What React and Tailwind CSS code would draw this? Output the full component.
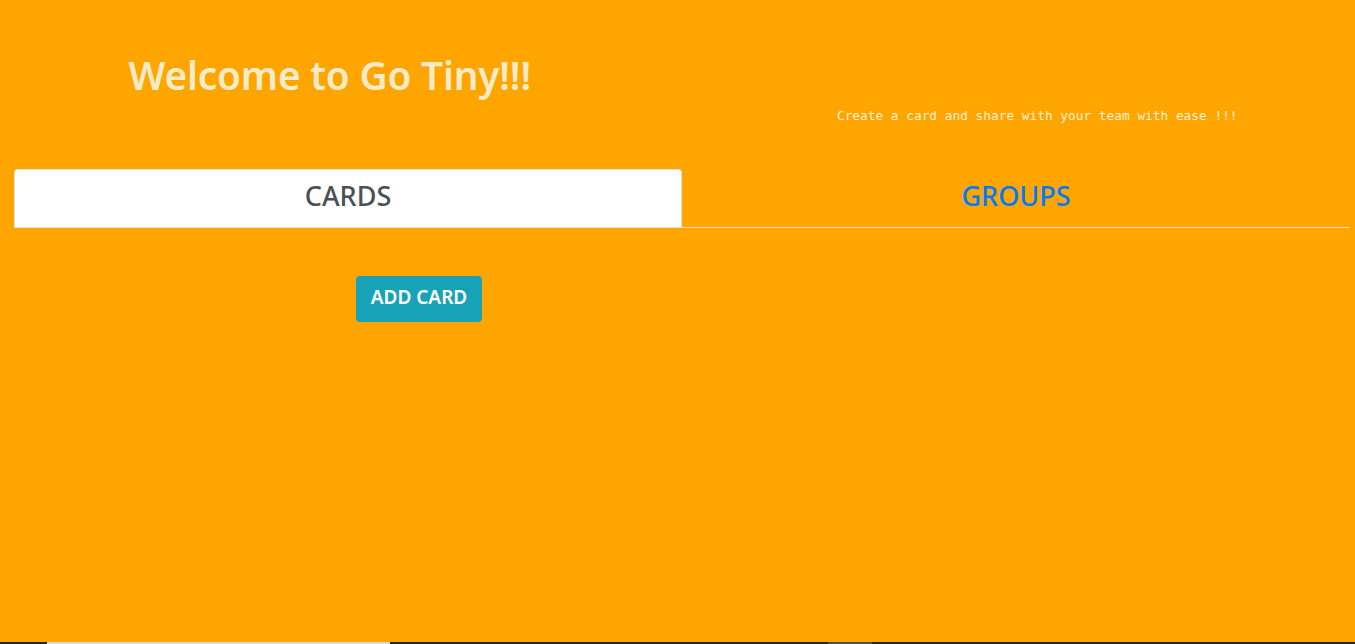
import React, { useState } from 'react';

export default function App() {
  const [tab, setTab] = useState('cards');

  return (
    <div className="min-h-[644px] bg-[#ffa500] flex flex-col" style={{ fontFamily: '"Noto Sans", "Open Sans", sans-serif' }}>
      <div className="flex-1">
        {/* header */}
        <div className="grid grid-cols-2 pt-[50px]">
          <div className="flex justify-center pr-[18px]">
            <h1 className="text-[38.8px] font-semibold text-[#f5ebc6] leading-[50px] tracking-[-0.2px]">Welcome to Go Tiny!!!</h1>
          </div>
          <div className="flex justify-center pt-[58px] pl-[42px]">
            <p className="text-[12.8px] text-[#fdf0d2] leading-[16px]" style={{ fontFamily: '"DejaVu Sans Mono", "Liberation Mono", monospace' }}>
              Create a card and share with your team with ease !!!
            </p>
          </div>
        </div>

        {/* tabs */}
        <div className="mx-[14px] mt-[45px] mr-[5px] flex border-b border-[#f1e2c4]">
          <button
            onClick={() => setTab('cards')}
            className={`w-[668px] h-[58px] rounded-t-[4px] border border-b-0 text-[27px] font-medium pb-[4px] ${tab === 'cards' ? 'bg-white border-[#dee2e6] text-[#495057]' : 'border-transparent text-[#007bff]'}`}
          >
            CARDS
          </button>
          <button
            onClick={() => setTab('groups')}
            className={`flex-1 h-[58px] rounded-t-[4px] border border-b-0 text-[27px] font-medium pb-[4px] ${tab === 'groups' ? 'bg-white border-[#dee2e6] text-[#495057]' : 'border-transparent text-[#007bff]'}`}
          >
            GROUPS
          </button>
        </div>

        {/* content */}
        <div className="pt-[48px] pl-[356px]">
          <button className="h-[46px] w-[126px] rounded-[4px] bg-[#17a2b8] text-white text-[19px] font-semibold pb-[4px]">
            ADD CARD
          </button>
        </div>
      </div>
      <div className="h-[2px] bg-[#23272b] flex">
        <div className="ml-[47px] w-[343px] bg-[#d9d9d9]" />
        <div className="ml-[438px] w-[44px] bg-[#4a4e55]" />
      </div>
    </div>
  );
}
